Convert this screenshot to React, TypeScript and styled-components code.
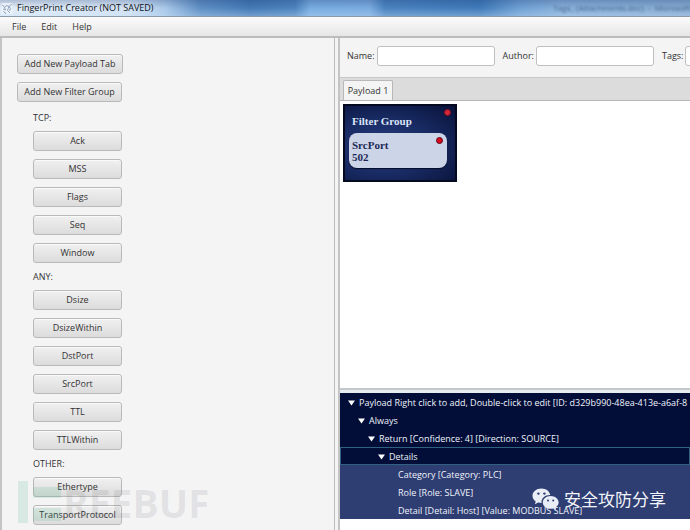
import React from "react";
import styled, { createGlobalStyle } from "styled-components";

const Global = createGlobalStyle`
  * { box-sizing: border-box; }
  html, body, #root { height: 100%; margin: 0; }
  body {
    overflow: hidden;
    background: #f4f4f5;
    color: #333;
    font: 9px/14px "Open Sans", "Noto Sans", sans-serif;
  }
  button, input { font: inherit; color: inherit; }
`;

const Window = styled.div`
  position: relative;
  display: flex;
  flex-direction: column;
  height: 100vh;
  overflow: hidden;
`;

const TitleBar = styled.header`
  display: flex;
  align-items: center;
  height: 17px;
  padding-left: 1px;
  gap: 4px;
  flex: none;
  overflow: hidden;
  color: #101418;
  border-bottom: 1px solid #8d9aa8;
  background:
    linear-gradient(to bottom, rgba(20, 50, 110, 0.25), rgba(255, 255, 255, 0) 50%, rgba(200, 225, 250, 0.35)),
    linear-gradient(to right, #e4eef8 0, #d3e3f3 130px, #a9c8e8 165px, #5f8fc4 200px, #4379b5 250px, #4d83bd 295px, #78ace0 310px, #79aade 370px, #4a83bf 385px, #3f7ab8 480px, #6fa0d3 520px, #86aed8 560px, #86aad0 100%);
`;

const Title = styled.h1`
  margin: 0;
  font-size: 9px;
  line-height: 14px;
  font-weight: 400;
  white-space: nowrap;
`;

const GhostTitle = styled.span`
  margin-left: auto;
  white-space: pre;
  font-size: 8px;
  color: #2c4a70;
  filter: blur(1px);
  opacity: 0.7;
`;

const MenuBar = styled.nav`
  display: flex;
  flex: none;
  align-items: center;
  height: 21px;
  padding: 0 12px;
  gap: 15px;
  background: linear-gradient(#fbfbfb, #e6e6e6);
  border-bottom: 2px solid #bcbcbc;
`;

const MenuButton = styled.button`
  padding: 0;
  border: 0;
  background: none;
`;

const Body = styled.div`
  display: grid;
  grid-template-columns: 67fr 71fr;
  flex: 1;
  min-height: 0;
`;

const Sidebar = styled.aside`
  display: flex;
  flex-direction: column;
  align-items: flex-start;
  gap: 8px;
  padding: 16px 16px 0 15px;
  border-left: 2px solid #c4c4c4;
  border-right: 1px solid #bcbcbc;
  overflow: hidden;
`;

const Groups = styled.div`
  display: flex;
  flex-direction: column;
  gap: 8px;
  padding: 2px 0 0 16px;
`;

const Group = styled.section`
  display: flex;
  flex-direction: column;
  gap: 8px;
`;

const GroupTitle = styled.h2`
  margin: 0;
  font-size: 9px;
  line-height: 11px;
  font-weight: 400;
`;

const PushButton = styled.button<{ $width: number }>`
  width: ${(p) => p.$width}px;
  height: 20px;
  flex: none;
  padding: 0;
  line-height: 14px;
  white-space: nowrap;
  border: 1px solid #b9b9b9;
  border-radius: 3px;
  background: linear-gradient(#f0f0f0, #dcdcdc);
  box-shadow: inset 0 1px 0 #fafafa;
`;

const Main = styled.main`
  display: flex;
  flex-direction: column;
  min-width: 0;
  margin-left: 3px;
  border-left: 2px solid #c4c4c4;
`;

const Form = styled.form`
  display: flex;
  flex: none;
  height: 39px;
  align-items: flex-start;
  gap: 8px;
  padding: 8px 0 0 7px;
  overflow: hidden;
`;

const Field = styled.label`
  display: flex;
  flex: none;
  align-items: center;
  gap: 2px;
`;

const TextInput = styled.input`
  width: 118px;
  height: 20px;
  padding: 0 4px;
  border: 1px solid #bfbfbf;
  border-radius: 3px;
  background: #fff;
`;

const TabStrip = styled.div`
  display: flex;
  flex: none;
  align-items: flex-end;
  height: 24px;
  padding-left: 3px;
  background: #dcdcdc;
  border-top: 1px solid #c8c8c8;
  border-bottom: 1px solid #b8b8b8;
`;

const Tab = styled.button`
  height: 20px;
  width: 50px;
  padding: 0;
  white-space: nowrap;
  border: 1px solid #b8b8b8;
  border-bottom: 0;
  border-radius: 2px 2px 0 0;
  background: #f4f4f4;
`;

const Canvas = styled.section`
  flex: 1;
  min-height: 0;
  padding: 3px;
  background: #fff;
`;

const FilterCard = styled.article`
  position: relative;
  width: 114px;
  height: 78px;
  padding: 8px 8px 0 4px;
  border: 2px solid #050a20;
  background: radial-gradient(ellipse at 35% 55%, #2a3d80, #182a62 50%, #081238);
`;

const CardTitle = styled.h3`
  margin: 0 0 5px 3px;
  font: bold 11px/14px "Liberation Serif", serif;
  color: #dbe4f8;
`;

const RuleCard = styled.div`
  position: relative;
  height: 35px;
  padding: 6px 3px;
  border-radius: 8px;
  background: #ccd4e8;
  box-shadow: 0 1px 1px #060d28;
  color: #1c2a55;
  font: bold 11px/12px "Liberation Serif", serif;
`;

const CloseDot = styled.button<{ $dim?: boolean }>`
  position: absolute;
  top: ${(p) => (p.$dim ? 3 : 4)}px;
  right: 4px;
  width: 7px;
  height: 7px;
  padding: 0;
  border-radius: 50%;
  border: 1px solid ${(p) => (p.$dim ? "#8a0a1c" : "#5a0718")};
  background: ${(p) => (p.$dim ? "#d02a3c" : "#d80a1c")};
`;

const Tree = styled.ul`
  flex: none;
  margin: 0;
  padding: 3px 0 11px;
  list-style: none;
  background: linear-gradient(#e6ecef 3px, #fff 3px);
  border-top: 2px solid #c4c8ca;
`;

const TreeRow = styled.li<{ $level: number; $leaf?: boolean; $focus?: boolean }>`
  display: flex;
  align-items: center;
  gap: 4px;
  height: 18px;
  padding-top: 2px;
  padding-left: ${(p) => 7 + p.$level * 10}px;
  white-space: nowrap;
  overflow: hidden;
  color: #f0f3fb;
  background: ${(p) => (p.$leaf ? "#2e3d72" : "#020e38")};
  border: solid ${(p) => (p.$focus ? "#2f6280" : "transparent")};
  border-width: ${(p) => (p.$focus ? "1px" : "0 1px")};
`;

const ArrowIcon = styled.svg`
  flex: none;
`;

const Brand = styled.div`
  position: absolute;
  right: 24px;
  bottom: 19px;
  display: flex;
  align-items: center;
  gap: 4px;
  color: #f2f4fa;
  font: 17px/24px "Noto Sans CJK SC", sans-serif;
  pointer-events: none;
`;

const Watermark = styled.div`
  position: absolute;
  left: 18px;
  bottom: 7px;
  display: flex;
  align-items: flex-end;
  gap: 2px;
  color: rgba(60, 60, 70, 0.1);
  font: 700 39px/40px "Open Sans", sans-serif;
  pointer-events: none;
`;

const Arrow = () => (
  <ArrowIcon width="7" height="6" viewBox="0 0 7 6" aria-hidden="true">
    <path d="M0 0.5H7L3.5 5.5Z" fill="#fff" />
  </ArrowIcon>
);

const AppIcon = () => (
  <svg width="12" height="13" viewBox="0 0 12 13" fill="none" aria-hidden="true">
    <rect x="0.5" y="1" width="11" height="11" fill="#eef4fa" opacity="0.8" />
    <path d="M1 3L3.5 5L6 3.5L8 4.5L11 2M3.5 5L4.5 8M8 4.5L6.5 8.5L9 11M4.5 8L2 7M9.5 6.5L8.5 9" stroke="#8a9cb4" strokeWidth="0.9" />
    <path d="M2.5 9.5L5 11.5M8 4.5L9.5 6.5" stroke="#7f95b8" />
  </svg>
);

const ChatIcon = () => (
  <svg width="28" height="23" viewBox="0 0 28 23" aria-hidden="true">
    <path d="M9.5 0.5C4.3 0.5 0.5 3.8 0.5 7.8C0.5 10.1 1.8 12.1 3.7 13.4L2.9 16.2L6.2 14.6C7.3 14.9 8.4 15 9.6 15C9 10.5 13 7 18.3 7.1C17.6 3.3 14 0.5 9.5 0.5Z" fill="#e9edf6" />
    <path d="M18.6 8C14.2 8 10.8 10.9 10.8 14.4C10.8 18 14.2 20.8 18.6 20.8C19.6 20.8 20.5 20.7 21.4 20.4L24.2 22L23.5 19.4C25.4 18.2 26.6 16.4 26.6 14.4C26.6 10.9 23.1 8 18.6 8Z" fill="#e9edf6" />
    <g fill="#2e3d72">
      <circle cx="6.4" cy="5.6" r="1.2" />
      <circle cx="12.4" cy="5.6" r="1.2" />
      <circle cx="16" cy="12.6" r="1" />
      <circle cx="21.2" cy="12.6" r="1" />
    </g>
  </svg>
);

const WatermarkBars = () => (
  <svg width="43" height="42" viewBox="0 0 43 42" fill="#3fae80" fillOpacity="0.15" aria-hidden="true">
    <rect width="10" height="42" />
    <rect x="15" y="6" width="28" height="11" />
    <rect x="15" y="27" width="28" height="13" />
  </svg>
);

const groups = [
  { title: "TCP:", items: ["Ack", "MSS", "Flags", "Seq", "Window"] },
  { title: "ANY:", items: ["Dsize", "DsizeWithin", "DstPort", "SrcPort", "TTL", "TTLWithin"] },
  { title: "OTHER:", items: ["Ethertype", "TransportProtocol"] },
];

export default function App() {
  return (
    <Window>
      <Global />
      <TitleBar>
        <AppIcon />
        <Title>FingerPrint Creator (NOT SAVED)</Title>
        <GhostTitle>Tags_ (Attachments.doc)  -  Microsoft</GhostTitle>
      </TitleBar>
      <MenuBar>
        <MenuButton>File</MenuButton>
        <MenuButton>Edit</MenuButton>
        <MenuButton>Help</MenuButton>
      </MenuBar>
      <Body>
        <Sidebar>
          <PushButton $width={106}>Add New Payload Tab</PushButton>
          <PushButton $width={105}>Add New Filter Group</PushButton>
          <Groups>
            {groups.map((g) => (
              <Group key={g.title}>
                <GroupTitle>{g.title}</GroupTitle>
                {g.items.map((i) => (
                  <PushButton key={i} $width={89}>{i}</PushButton>
                ))}
              </Group>
            ))}
          </Groups>
        </Sidebar>
        <Main>
          <Form>
            <Field>Name:<TextInput /></Field>
            <Field>Author:<TextInput /></Field>
            <Field>Tags:<TextInput /></Field>
          </Form>
          <TabStrip><Tab>Payload 1</Tab></TabStrip>
          <Canvas>
            <FilterCard>
              <CloseDot $dim aria-label="Remove group" />
              <CardTitle>Filter Group</CardTitle>
              <RuleCard>
                <CloseDot aria-label="Remove filter" />
                SrcPort<br />502
              </RuleCard>
            </FilterCard>
          </Canvas>
          <Tree>
            <TreeRow $level={0}><Arrow />Payload Right click to add, Double-click to edit [ID: d329b990-48ea-413e-a6af-8</TreeRow>
            <TreeRow $level={1}><Arrow />Always</TreeRow>
            <TreeRow $level={2}><Arrow />Return [Confidence: 4] [Direction: SOURCE]</TreeRow>
            <TreeRow $level={3} $focus><Arrow />Details</TreeRow>
            <TreeRow $level={5} $leaf>Category [Category: PLC]</TreeRow>
            <TreeRow $level={5} $leaf>Role [Role: SLAVE]</TreeRow>
            <TreeRow $level={5} $leaf>Detail [Detail: Host] [Value: MODBUS SLAVE]</TreeRow>
          </Tree>
        </Main>
      </Body>
      <Watermark>
        <WatermarkBars />
        <span>REEBUF</span>
      </Watermark>
      <Brand><ChatIcon />安全攻防分享</Brand>
    </Window>
  );
}
